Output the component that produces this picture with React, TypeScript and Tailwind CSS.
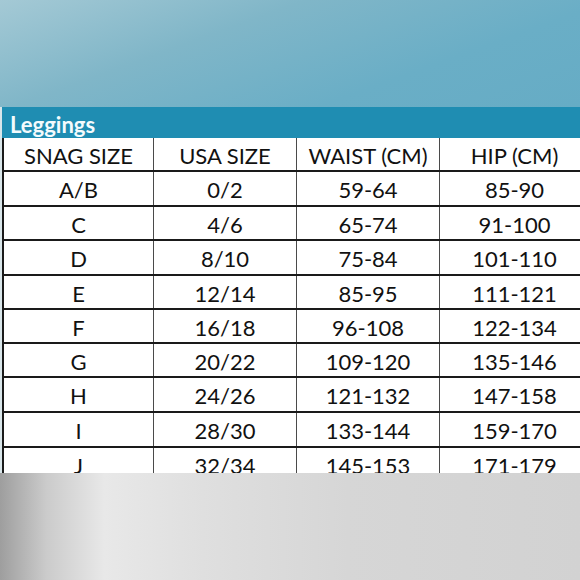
const rows: [string, string, string, string][] = [
  ["A/B", "0/2", "59-64", "85-90"],
  ["C", "4/6", "65-74", "91-100"],
  ["D", "8/10", "75-84", "101-110"],
  ["E", "12/14", "85-95", "111-121"],
  ["F", "16/18", "96-108", "122-134"],
  ["G", "20/22", "109-120", "135-146"],
  ["H", "24/26", "121-132", "147-158"],
  ["I", "28/30", "133-144", "159-170"],
  ["J", "32/34", "145-153", "171-179"],
];

const heights = ["h-[35px]", "h-[34px]", "h-[35px]", "h-[34px]", "h-[34px]", "h-[34px]", "h-[35px]", "h-[35px]", "h-[35px]"];

const Row = ({ cells, h }: { cells: string[]; h: string }) => (
  <div className={`grid grid-cols-[150px_143px_143px_150px] border-b-2 border-[#1a1a1a] ${h}`}>
    {cells.map((c, i) => (
      <div
        key={i}
        className="flex items-center justify-center border-r border-[#4a4a4a] text-[22px] text-[#111] leading-none pt-[3px]"
      >
        {c}
      </div>
    ))}
  </div>
);

export default function App() {
  return (
    <div className="w-[580px] h-[580px] overflow-hidden flex flex-col font-['Lato','Open_Sans',sans-serif]">
      <div className="h-[107px] shrink-0 bg-[linear-gradient(160deg,#a4c9d5_0%,#80b6c8_35%,#6aaec6_70%,#66acc5_100%)]" />
      <div className="h-[366px] shrink-0 overflow-hidden pl-[2px] bg-[#d9e6ea]">
        <div className="bg-white border-l-2 border-[#1a1a1a] w-[600px]">
          <div className="h-[31px] bg-[#1f8db2] flex items-end pb-[2px] -ml-[2px] pl-[8px] text-[#f4fbfd] font-bold text-[22px] leading-none">
            Leggings
          </div>
          <Row cells={["SNAG SIZE", "USA SIZE", "WAIST (CM)", "HIP (CM)"]} h="h-[34px]" />
          {rows.map((r, i) => (
            <Row key={r[0]} cells={r} h={heights[i]} />
          ))}
        </div>
      </div>
      <div className="flex-1 bg-[linear-gradient(90deg,#9e9e9e_0%,#cbcbcb_8%,#e8e8e8_18%,#dfdfdf_35%,#d6d6d6_60%,#d2d2d2_100%)]" />
    </div>
  );
}
